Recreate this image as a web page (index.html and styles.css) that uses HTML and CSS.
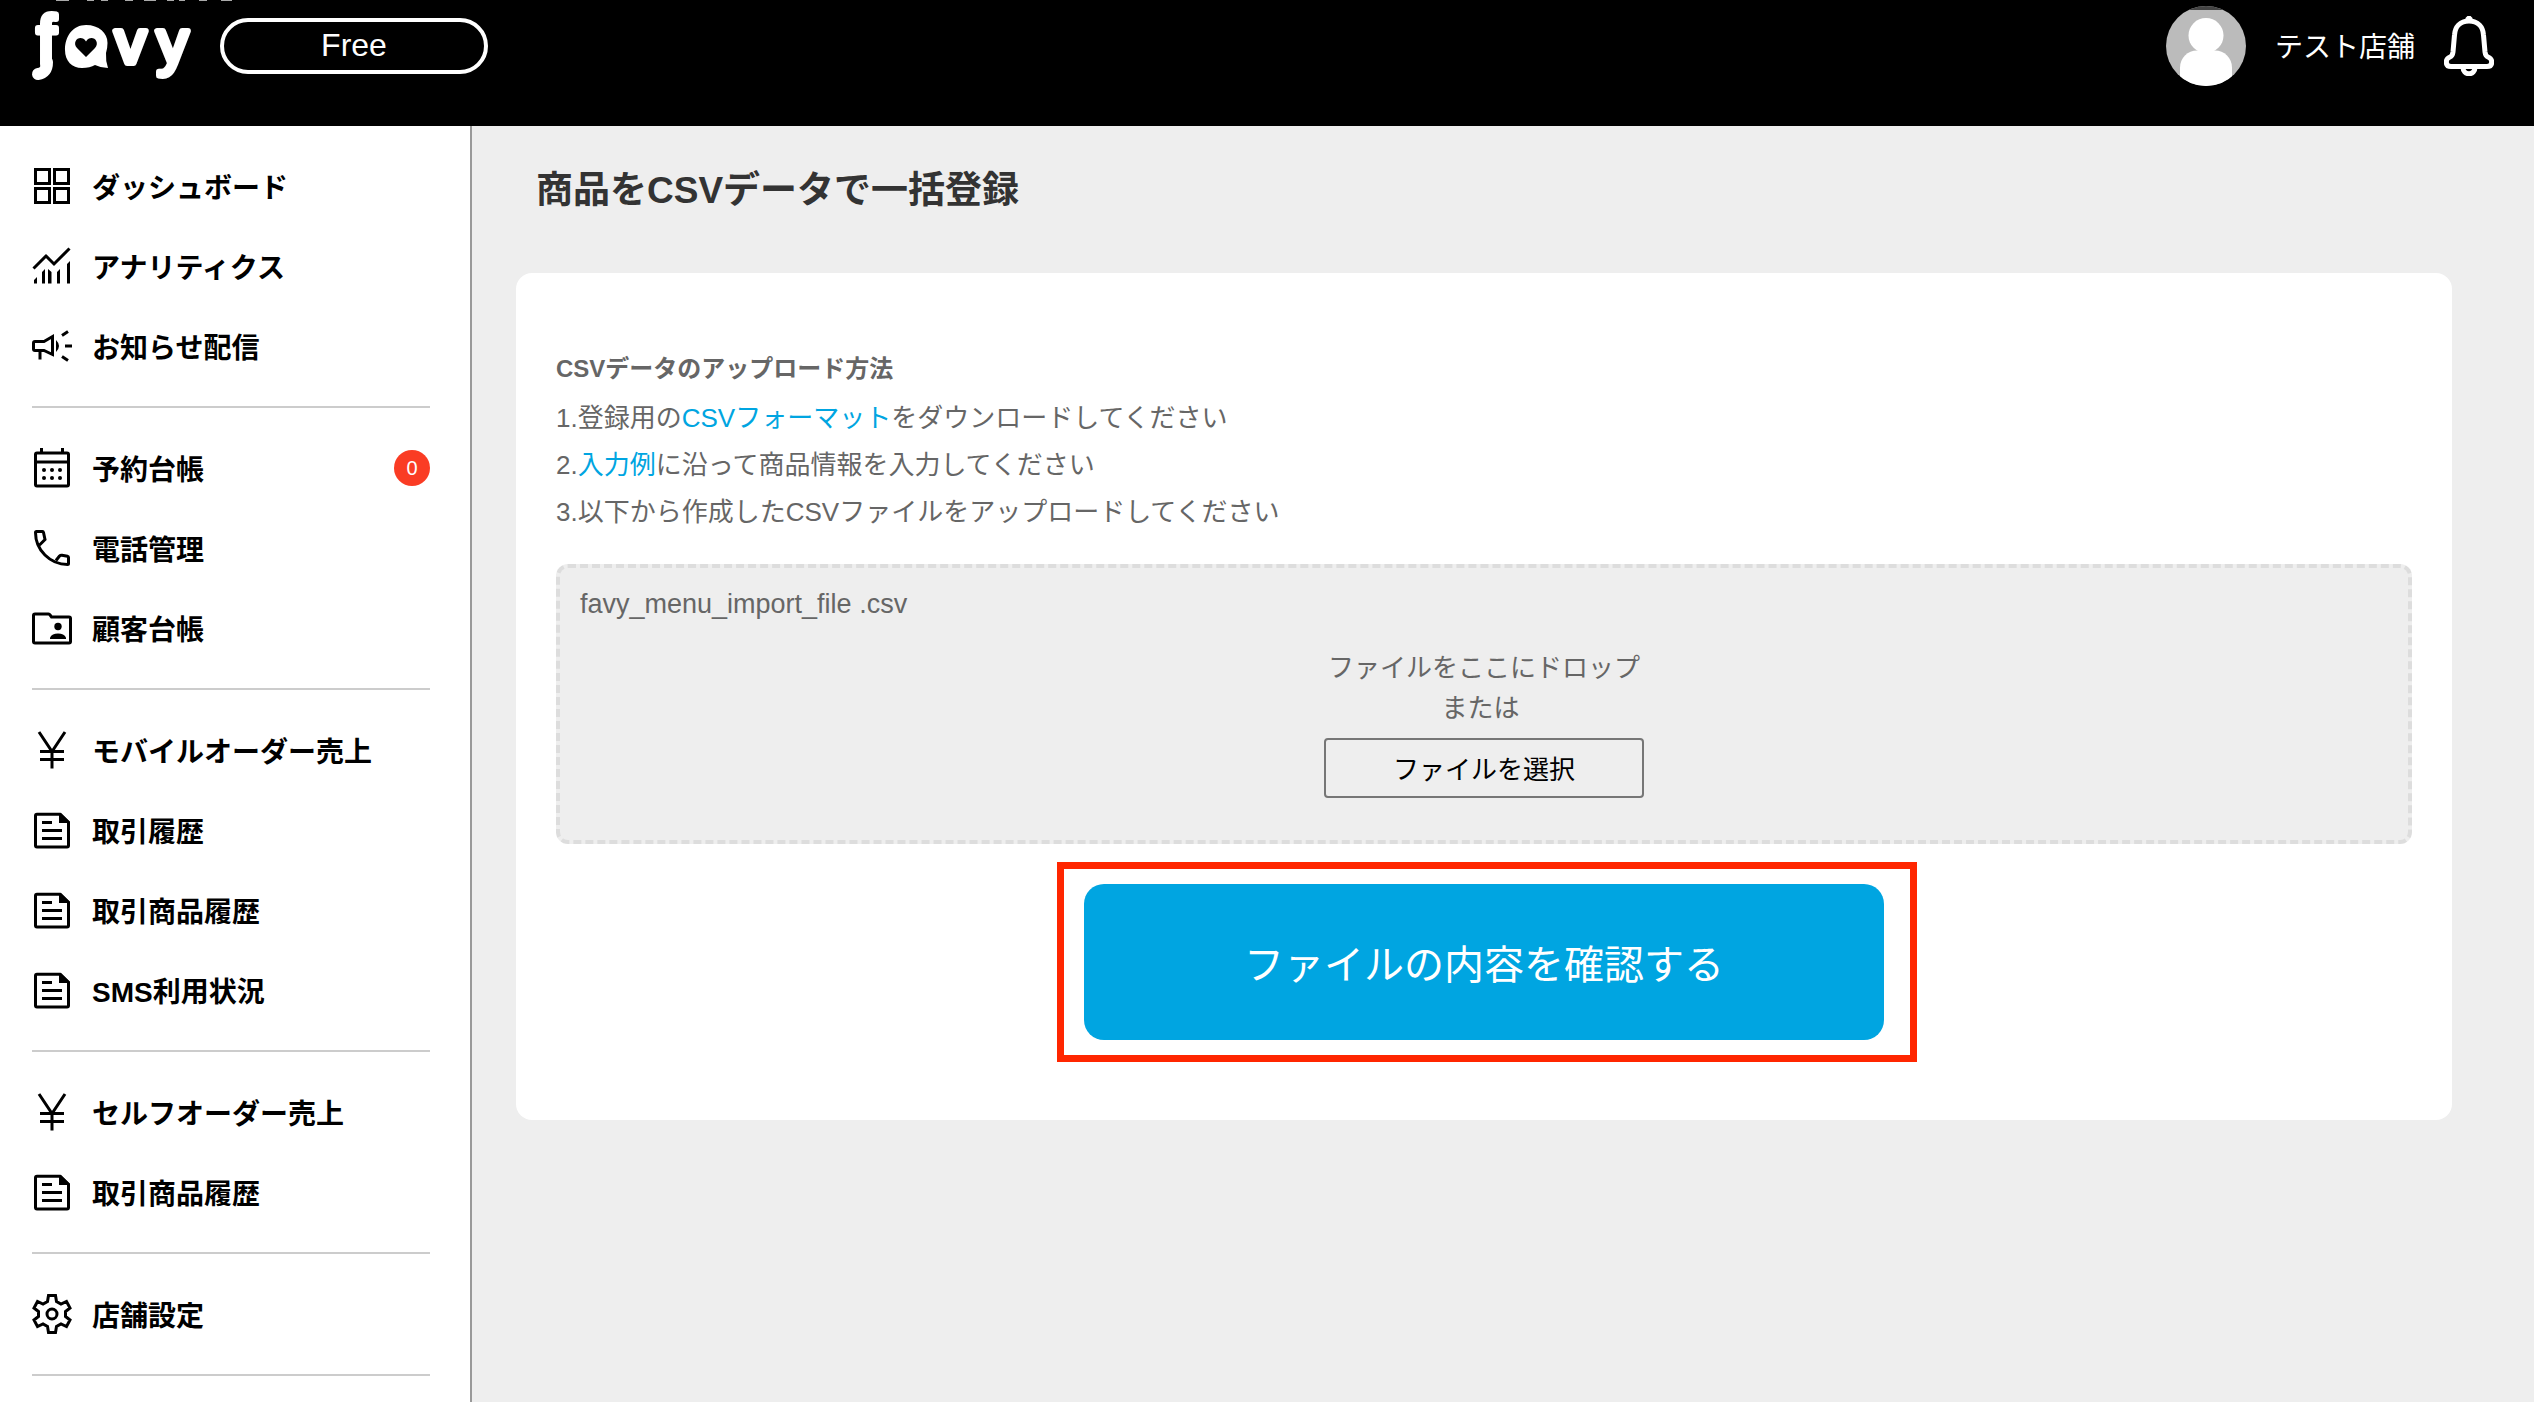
FILE: index.html
```html
<!DOCTYPE html>
<html lang="ja">

<head>
    <meta charset="UTF-8">
    <meta name="viewport" content="width=device-width, initial-scale=1.0">
    <title>商品をCSVデータで一括登録</title>
    <link rel="stylesheet" href="styles.css">
</head>

<body>

    <!-- shared menu icons -->
    <svg class="icon-defs" aria-hidden="true">
        <symbol id="icon-yen" viewBox="0 0 40 40">
            <path d="M7 2L20 21.5L33 2M20 21V38.5M8 21.5H32M8 29.5H32" />
        </symbol>
        <symbol id="icon-doc" viewBox="0 0 40 40">
            <path d="M28 4.2H5Q3.5 4.2 3.5 5.7V35.5Q3.5 37 5 37H35Q36.5 37 36.5 35.5V12.5ZM10 12.5H20M10 20.5H30M10 28.5H30" />
            <path class="solid" d="M27 3H29L38 12V13H27Z" />
        </symbol>
    </svg>

    <header>
        <a href="#" class="logo" aria-label="favy">
            <svg width="204" height="80" viewBox="0 0 204 80">
                <g class="logo-tagline">
                    <rect x="24" width="13" height="1" />
                    <rect x="55" width="7" height="1" />
                    <rect x="69" width="7" height="1" />
                    <rect x="93" width="8" height="1" />
                    <rect x="112" width="12" height="1" />
                    <rect x="135" width="7" height="1" />
                    <rect x="147" width="6" height="1" />
                    <rect x="167" width="8" height="1" />
                    <rect x="189" width="11" height="1" />
                </g>
                <g class="logo-text">
                    <text x="5" y="64" font-size="68">f</text>
                    <text x="40" y="62" font-size="48">a</text>
                    <text x="83" y="63" font-size="62">v</text>
                    <text x="125" y="63" font-size="62">y</text>
                </g>
                <path class="logo-tail" d="M15 62Q15 73 6 74" />
                <path class="logo-bubble" d="M54 25C67 25 75.500 33 75.500 43Q75.500 48 74 53Q73.500 61 76 68Q69 68 63 65Q58 68 50 68C40 68 33 61 33 50C33 36 41 25 54 25Z" />
                <path class="logo-heart" d="M54 57L45 48C40 42 46 36 51 38.500Q53 39.500 54 41.500Q55 39.500 57 38.500C62 36 68 42 63 48Z" />
            </svg>
        </a>
        <button type="button" class="plan">Free</button>

        <div class="account">
            <svg width="80" height="80" viewBox="0 0 80 80">
                <clipPath id="avatar-clip">
                    <circle cx="40" cy="40" r="40" />
                </clipPath>
                <g clip-path="url(#avatar-clip)">
                    <rect width="80" height="80" fill="#bbb" />
                    <rect width="80" height="4" fill="#444" />
                    <circle cx="40" cy="29.500" r="17.500" fill="#fff" />
                    <rect x="14" y="44.500" width="52" height="50" rx="17" fill="#fff" />
                </g>
            </svg>
            <span class="shop-name">テスト店舗</span>
            <svg class="bell" width="50" height="60" viewBox="0 0 50 60">
                <path d="M25 5C16 5 11 11 10.500 19L9 36Q8.500 40 6 41Q2.300 42.500 2.300 46Q2.300 50.500 7 50.500H43Q47.700 50.500 47.700 46Q47.700 42.500 44 41Q41.500 40 41 36L39.500 19C39 11 34 5 25 5Z" />
                <path d="M19 51.500A6 6.300 0 0 0 31 51.500" />
                <path d="M23 4L25 2L27 4" />
            </svg>
        </div>
    </header>

    <div class="wrapper">
        <nav>
            <ul>
                <li><a href="#">
                    <svg class="icon" viewBox="0 0 40 40"><path d="M3.500 3.500H17.500V17.500H3.500ZM22.500 3.500H36.500V17.500H22.500ZM3.500 22.500H17.500V36.500H3.500ZM22.500 22.500H36.500V36.500H22.500Z" /></svg>
                    ダッシュボード</a></li>
                <li><a href="#">
                    <svg class="icon" viewBox="0 0 40 40">
                        <path d="M1.500 22.500L14 10L22 18L37.500 2.500" />
                        <path class="solid" d="M2 34L5 31V37.500H2ZM10 26L13 23V37.500H10ZM16 23L19.500 26V37.500H16ZM25 26L28 23V37.500H25ZM35 18L38 15V37.500H35Z" />
                    </svg>
                    アナリティクス</a></li>
                <li><a href="#">
                    <svg class="icon" viewBox="0 0 40 40">
                        <path d="M20.500 10.500V28.500L12 24.500H3Q1.500 24.500 1.500 23V17Q1.500 15.500 3 15.500H12ZM8 25V33.500M30 9.500L36 5.500M33 20H40M30 30.500L36 34.500" />
                        <path class="solid" d="M24 14Q27 17 27 20T24 26Z" />
                    </svg>
                    お知らせ配信</a></li>
            </ul>
            <ul>
                <li><a href="#">
                    <svg class="icon" viewBox="0 0 40 40">
                        <path d="M5 5H35Q36.500 5 36.500 6.500V36.500Q36.500 38 35 38H5Q3.500 38 3.500 36.500V6.500Q3.500 5 5 5ZM3.500 14H36.500M9.500 0V4M30.500 0V4" />
                        <g class="solid">
                            <circle cx="12" cy="22" r="2" />
                            <circle cx="20" cy="22" r="2" />
                            <circle cx="28" cy="22" r="2" />
                            <circle cx="12" cy="30" r="2" />
                            <circle cx="20" cy="30" r="2" />
                            <circle cx="28" cy="30" r="2" />
                        </g>
                    </svg>
                    予約台帳<span class="badge">0</span></a></li>
                <li><a href="#">
                    <svg class="icon" viewBox="0 0 40 40"><path d="M7.500 17L13 11.500L11.500 4.500Q11.300 3.500 10.500 3.500H4.500Q3.500 3.500 3.500 4.500C3.500 22 18 36.500 35.500 36.500Q36.500 36.500 36.500 35.500V29.500Q36.500 28.500 35.500 28.300L30 27.200Q28.500 27 27.500 28L24 32.500" /></svg>
                    電話管理</a></li>
                <li><a href="#">
                    <svg class="icon" viewBox="0 0 40 40">
                        <path d="M3 6H16.500Q17.500 6 18 7L19.500 9H37Q38.500 9 38.500 10.500V33.500Q38.500 35 37 35H3Q1.500 35 1.500 33.500V7.500Q1.500 6 3 6Z" />
                        <path class="solid" d="M18 31V29.500Q20 25.500 26 25.500T34 29.500V31Z" />
                        <circle class="solid" cx="26" cy="18.500" r="3.700" />
                    </svg>
                    顧客台帳</a></li>
            </ul>
            <ul>
                <li><a href="#"><svg class="icon"><use href="#icon-yen" /></svg>モバイルオーダー売上</a></li>
                <li><a href="#"><svg class="icon"><use href="#icon-doc" /></svg>取引履歴</a></li>
                <li><a href="#"><svg class="icon"><use href="#icon-doc" /></svg>取引商品履歴</a></li>
                <li><a href="#"><svg class="icon"><use href="#icon-doc" /></svg>SMS利用状況</a></li>
            </ul>
            <ul>
                <li><a href="#"><svg class="icon"><use href="#icon-yen" /></svg>セルフオーダー売上</a></li>
                <li><a href="#"><svg class="icon"><use href="#icon-doc" /></svg>取引商品履歴</a></li>
            </ul>
            <ul>
                <li><a href="#">
                    <svg class="icon" viewBox="0 0 40 40">
                        <path d="M16.500 1.500H23.500L24.500 7.500L29 10L34.500 7.500L38 14L33.500 17.500V22.500L38 26L34.500 32.500L29 30L24.500 32.500L23.500 38.500H16.500L15.500 32.500L11 30L5.500 32.500L2 26L6.500 22.500V17.500L2 14L5.500 7.500L11 10L15.500 7.500Z" />
                        <circle cx="20" cy="20" r="5" />
                    </svg>
                    店舗設定</a></li>
            </ul>
        </nav>

        <main>
            <h1>商品をCSVデータで一括登録</h1>

            <section class="card">
                <h2>CSVデータのアップロード方法</h2>
                <p>1.登録用の<a href="#">CSVフォーマット</a>をダウンロードしてください</p>
                <p>2.<a href="#">入力例</a>に沿って商品情報を入力してください</p>
                <p>3.以下から作成したCSVファイルをアップロードしてください</p>

                <div class="dropzone">
                    <div class="file-name">favy_menu_import_file .csv</div>
                    <div class="drop-guide">ファイルをここにドロップ<br>または&nbsp;</div>
                    <button type="button" class="select-file">ファイルを選択</button>
                </div>

                <div class="submit-area">
                    <button type="submit" class="submit">ファイルの内容を確認する</button>
                </div>
            </section>
        </main>
    </div>

</body>

</html>
```
FILE: styles.css
```css
* {
    box-sizing: border-box;
}

body {
    font-family: "Liberation Sans", "Noto Sans CJK JP", sans-serif;
    font-size: 26px;
    margin: 0;
    height: 100vh;
    overflow: hidden;
    display: flex;
    flex-direction: column;
    background-color: #eee;
    color: #666;
}

a {
    color: #00a5e1;
    text-decoration: none;
}

button {
    font-family: inherit;
    cursor: pointer;
}

.icon-defs {
    display: none;
}

header {
    display: flex;
    align-items: flex-start;
    flex-shrink: 0;
    height: 126px;
    padding: 0 40px 0 32px;
    background-color: #000;
    color: white;
}

.logo svg {
    display: block;
    overflow: visible;
}

.logo-tagline {
    fill: #aaa;
}

.logo-text {
    fill: white;
    stroke: white;
    stroke-width: 6;
    stroke-linejoin: round;
}

.logo-tail {
    fill: none;
    stroke: white;
    stroke-width: 12;
    stroke-linecap: round;
}

.logo-bubble {
    fill: white;
}

.logo-heart {
    fill: #000;
}

.plan {
    width: 268px;
    height: 56px;
    margin: 18px 0 0 -16px;
    padding: 0 0 2px;
    border: 4px solid white;
    border-radius: 28px;
    background: none;
    color: white;
    font-size: 32px;
}

.account {
    display: flex;
    align-items: center;
    gap: 29px;
    height: 80px;
    margin: 6px 0 0 auto;
}

.shop-name {
    padding-bottom: 2px;
    font-size: 28px;
}

.bell {
    fill: none;
    stroke: white;
    stroke-width: 5;
}

.wrapper {
    display: flex;
    flex: 1;
    min-height: 0;
}

nav {
    flex-shrink: 0;
    width: 472px;
    padding: 0 40px 0 32px;
    overflow: hidden;
    border-right: 2px solid #999;
    background-color: white;
}

nav ul {
    list-style: none;
    margin: 0;
    padding: 20px 0;
    border-bottom: 2px solid #ccc;
}

nav a {
    display: flex;
    align-items: center;
    height: 80px;
    color: #000;
    font-size: 28px;
    font-weight: bold;
}

.icon {
    width: 40px;
    height: 40px;
    margin-right: 20px;
    fill: none;
    stroke: #000;
    stroke-width: 3;
}

.solid {
    fill: #000;
    stroke: none;
}

.badge {
    width: 36px;
    margin-left: auto;
    border-radius: 50%;
    background-color: #fa3c24;
    color: white;
    font-size: 20px;
    font-weight: normal;
    line-height: 36px;
    text-align: center;
}

main {
    flex: 1;
    padding: 0 82px 0 44px;
}

h1 {
    margin: 39px 20px 56px;
    color: #333;
    font-size: 37px;
    line-height: 52px;
}

.card {
    padding: 72px 40px 80px;
    border-radius: 16px;
    background-color: white;
}

h2 {
    margin: 0 0 2px;
    font-size: 24px;
    line-height: 48px;
}

p {
    margin: 0;
    line-height: 47px;
}

.dropzone {
    display: flex;
    flex-direction: column;
    align-items: center;
    margin-top: 28px;
    padding: 16px 20px 42px;
    border: 4px dashed #ddd;
    border-radius: 12px;
    background-color: #eee;
    line-height: 40px;
}

.file-name {
    align-self: flex-start;
    font-size: 27px;
}

.drop-guide {
    margin: 24px 0 10px;
    text-align: center;
}

.select-file {
    width: 320px;
    height: 60px;
    padding: 0 0 2px;
    border: 2px solid #767676;
    border-radius: 4px;
    background: none;
    color: #000;
    font-size: 26px;
}

.submit-area {
    position: relative;
    width: 800px;
    margin: 40px auto 0;
}

/* red frame around the button */
.submit-area::after {
    content: "";
    position: absolute;
    top: -22px;
    right: -33px;
    bottom: -22px;
    left: -27px;
    border: 7px solid #ff2600;
    pointer-events: none;
}

.submit {
    display: block;
    width: 100%;
    height: 156px;
    border: none;
    border-radius: 20px;
    background-color: #00a5e1;
    color: white;
    font-size: 40px;
}
```
